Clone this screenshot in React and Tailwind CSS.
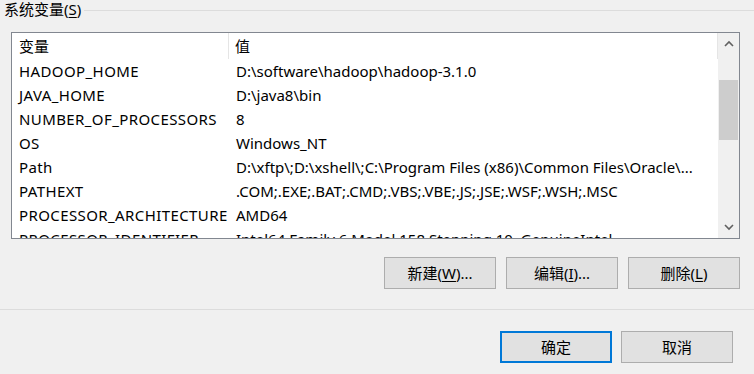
import React from 'react';

const rows = [
  ['HADOOP_HOME', 'D:\\software\\hadoop\\hadoop-3.1.0'],
  ['JAVA_HOME', 'D:\\java8\\bin'],
  ['NUMBER_OF_PROCESSORS', '8'],
  ['OS', 'Windows_NT'],
  ['Path', 'D:\\xftp\\;D:\\xshell\\;C:\\Program Files (x86)\\Common Files\\Oracle\\...'],
  ['PATHEXT', '.COM;.EXE;.BAT;.CMD;.VBS;.VBE;.JS;.JSE;.WSF;.WSH;.MSC'],
  ['PROCESSOR_ARCHITECTURE', 'AMD64'],
  ['PROCESSOR_IDENTIFIER', 'Intel64 Family 6 Model 158 Stepping 10, GenuineIntel'],
];

function Chevron({ down }) {
  return (
    <svg width="10" height="7" viewBox="0 0 10 7" className={down ? 'rotate-180' : ''}>
      <path d="M1 6 L5 2 L9 6" fill="none" stroke="#606060" strokeWidth="1.6" />
    </svg>
  );
}

function Btn({ children, primary }) {
  return (
    <button
      className={`w-[112px] h-[32px] bg-[#e1e1e1] text-[15px] text-black flex items-center justify-center ${
        primary ? 'border-2 border-[#0078d7]' : 'border border-[#adadad]'
      }`}
    >
      {children}
    </button>
  );
}

export default function App() {
  return (
    <div
      className="w-[754px] h-[374px] bg-[#f0f0f0] overflow-hidden text-black"
      style={{ fontFamily: '"Noto Sans", "Noto Sans CJK SC", sans-serif' }}
    >
      {/* group title */}
      <div className="flex items-center h-[19px]">
        <span className="pl-[4px] text-[15px] leading-[19px]">
          系统变量(<span className="underline underline-offset-2">S</span>)
        </span>
        <div className="flex-1 h-px bg-[#dcdcdc] ml-[3px] mt-[2px]" />
      </div>

      {/* list view */}
      <div className="ml-[11px] mt-[13px] w-[729px] h-[207px] border border-[#828790] bg-white flex">
        <div className="flex-1 overflow-hidden text-[15px]">
          <div className="flex h-[26px] items-center">
            <div className="w-[217px] h-full pl-[7px] flex items-center border-r border-[#e5e5e5]">变量</div>
            <div className="flex-1 h-full pl-[6px] flex items-center border-r border-[#e5e5e5]">值</div>
          </div>
          {rows.map(([k, v]) => (
            <div key={k} className="flex h-[24px] items-center whitespace-nowrap">
              <div className="w-[217px] pl-[7px] overflow-hidden tracking-[0.4px]">{k}</div>
              <div className="flex-1 pl-[7px] overflow-hidden">{v}</div>
            </div>
          ))}
        </div>
        <div className="w-[21px] bg-[#f0f0f0] flex flex-col">
          <div className="h-[21px] flex items-center justify-center">
            <Chevron />
          </div>
          <div className="h-[26px]" />
          <div className="h-[60px] mx-[1px] bg-[#cdcdcd]" />
          <div className="flex-1" />
          <div className="h-[21px] flex items-center justify-center">
            <Chevron down />
          </div>
        </div>
      </div>

      {/* action buttons */}
      <div className="flex justify-end gap-[10px] pr-[14px] mt-[18px]">
        <Btn>
          新建(<span className="underline underline-offset-2">W</span>)...
        </Btn>
        <Btn>
          编辑(<span className="underline underline-offset-2">I</span>)...
        </Btn>
        <Btn>
          删除(<span className="underline underline-offset-2">L</span>)
        </Btn>
      </div>

      <div className="h-px bg-[#dcdcdc] mt-[20px]" />

      <div className="flex justify-end gap-[9px] pr-[21px] mt-[21px]">
        <Btn primary>确定</Btn>
        <Btn>取消</Btn>
      </div>
    </div>
  );
}
